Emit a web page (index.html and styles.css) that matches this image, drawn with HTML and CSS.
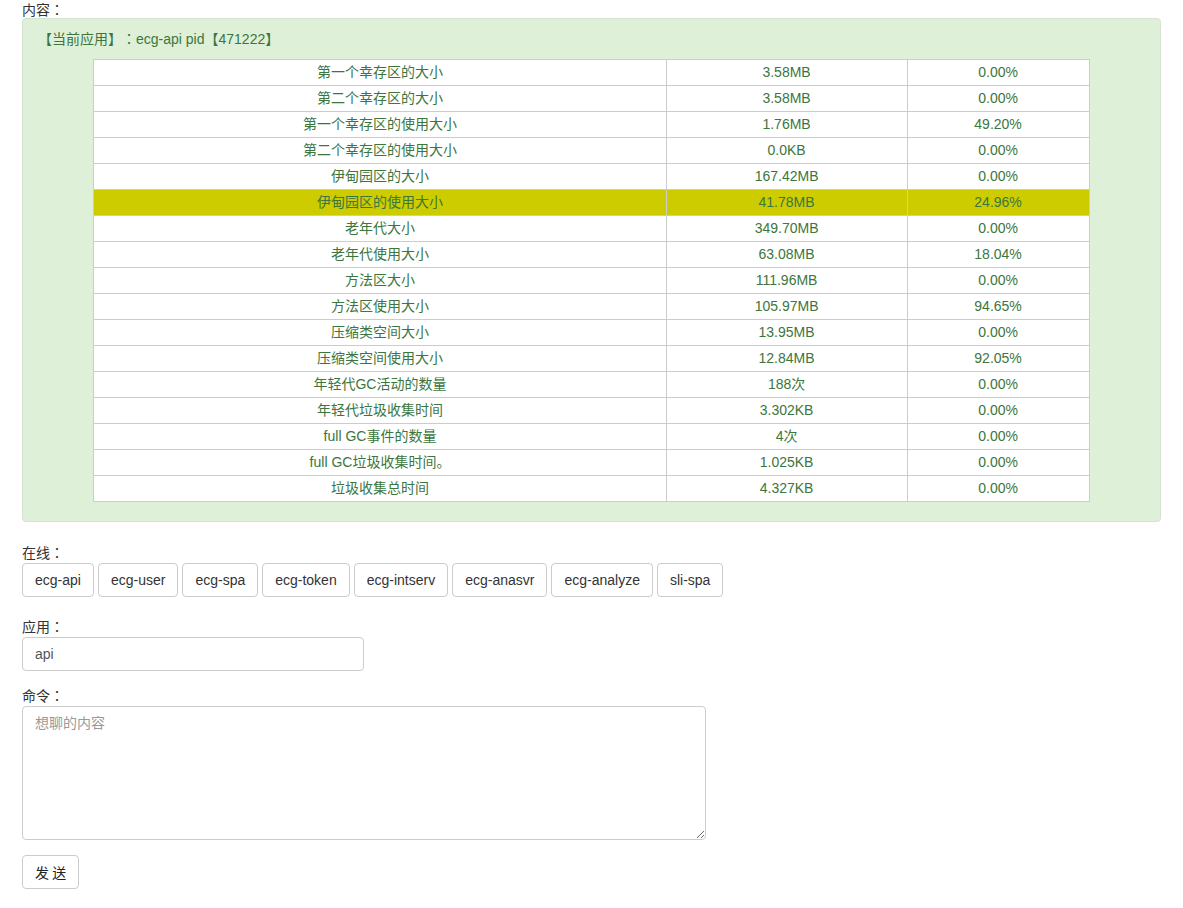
FILE: index.html
```html
<!DOCTYPE html>
<html lang="zh">
<head>
<meta charset="utf-8">
<title>JVM</title>
<link rel="stylesheet" href="styles.css">
</head>
<body>
<div class="page">
  <div class="label first">内容<span class="colon">：</span></div>
  <div class="alert">
    <div class="alert-title">【当前应用】<span class="colon">：</span>ecg-api pid【471222】</div>
    <table class="stats">
      <colgroup><col class="c1"><col class="c2"><col class="c3"></colgroup>
      <tbody>
        <tr><td>第一个幸存区的大小</td><td>3.58MB</td><td>0.00%</td></tr>
        <tr><td>第二个幸存区的大小</td><td>3.58MB</td><td>0.00%</td></tr>
        <tr><td>第一个幸存区的使用大小</td><td>1.76MB</td><td>49.20%</td></tr>
        <tr><td>第二个幸存区的使用大小</td><td>0.0KB</td><td>0.00%</td></tr>
        <tr><td>伊甸园区的大小</td><td>167.42MB</td><td>0.00%</td></tr>
        <tr class="hl"><td>伊甸园区的使用大小</td><td>41.78MB</td><td>24.96%</td></tr>
        <tr><td>老年代大小</td><td>349.70MB</td><td>0.00%</td></tr>
        <tr><td>老年代使用大小</td><td>63.08MB</td><td>18.04%</td></tr>
        <tr><td>方法区大小</td><td>111.96MB</td><td>0.00%</td></tr>
        <tr><td>方法区使用大小</td><td>105.97MB</td><td>94.65%</td></tr>
        <tr><td>压缩类空间大小</td><td>13.95MB</td><td>0.00%</td></tr>
        <tr><td>压缩类空间使用大小</td><td>12.84MB</td><td>92.05%</td></tr>
        <tr><td>年轻代GC活动的数量</td><td>188次</td><td>0.00%</td></tr>
        <tr><td>年轻代垃圾收集时间</td><td>3.302KB</td><td>0.00%</td></tr>
        <tr><td>full GC事件的数量</td><td>4次</td><td>0.00%</td></tr>
        <tr><td>full GC垃圾收集时间。</td><td>1.025KB</td><td>0.00%</td></tr>
        <tr><td>垃圾收集总时间</td><td>4.327KB</td><td>0.00%</td></tr>
      </tbody>
    </table>
  </div>

  <div class="label online">在线<span class="colon">：</span></div>
  <div class="btn-row">
    <button class="btn">ecg-api</button>
    <button class="btn">ecg-user</button>
    <button class="btn">ecg-spa</button>
    <button class="btn">ecg-token</button>
    <button class="btn">ecg-intserv</button>
    <button class="btn">ecg-anasvr</button>
    <button class="btn">ecg-analyze</button>
    <button class="btn">sli-spa</button>
  </div>

  <div class="label app">应用<span class="colon">：</span></div>
  <input class="input" type="text" value="api">

  <div class="label cmd">命令<span class="colon">：</span></div>
  <textarea class="textarea" placeholder="想聊的内容"></textarea>

  <div class="send-row">
    <button class="btn send">发 送</button>
  </div>
</div>
</body>
</html>
```

FILE: styles.css
```css
html, body {
  margin: 0;
  padding: 0;
  background: #fff;
}
body {
  font-family: "Liberation Sans", "Noto Sans CJK SC", sans-serif;
  font-size: 14px;
  line-height: 20px;
  color: #333;
  text-spacing-trim: space-all;
}
.page {
  padding: 0 22px;
}
.colon {
  display: inline-block;
  font-family: "Noto Sans CJK TC", sans-serif;
}
.label {
  line-height: 20px;
}
.label.first {
  line-height: 18px;
  height: 18px;
}
.alert {
  width: 1139px;
  box-sizing: border-box;
  background: #dff0d8;
  border: 1px solid #d6e2d0;
  border-radius: 4px;
  color: #3c763d;
  padding: 9px 15px 19px;
}
.alert-title {
  line-height: 20px;
  margin-bottom: 10px;
}
.stats {
  width: 90%;
  margin: 0 auto;
  border-collapse: collapse;
  background: #fff;
  table-layout: fixed;
}
.stats .c1 { width: 57.5%; }
.stats .c2 { width: 24.2%; }
.stats .c3 { width: 18.3%; }
.stats td {
  border: 1px solid #cccccc;
  text-align: center;
  padding: 2px 8px 3px;
  line-height: 20px;
}
.stats tr.hl td {
  background: #cccc00;
}
.label.online {
  margin-top: 20px;
}
.btn-row {
  display: flex;
  gap: 4px;
}
.btn {
  font-family: "Liberation Sans", "Noto Sans CJK SC", sans-serif;
  font-size: 14px;
  line-height: 20px;
  color: #333;
  background: #fff;
  border: 1px solid #ccc;
  border-radius: 4px;
  padding: 6px 12px;
  margin: 0;
}
.label.app {
  margin-top: 19px;
}
.input {
  display: block;
  box-sizing: border-box;
  width: 342px;
  height: 34px;
  padding: 6px 12px;
  font-family: "Liberation Sans", "Noto Sans CJK SC", sans-serif;
  font-size: 14px;
  line-height: 20px;
  color: #555;
  border: 1px solid #ccc;
  border-radius: 4px;
  margin: 0;
}
.label.cmd {
  margin-top: 14px;
}
.textarea {
  display: block;
  box-sizing: border-box;
  width: 684px;
  height: 134px;
  padding: 6px 12px;
  font-family: "Liberation Sans", "Noto Sans CJK SC", sans-serif;
  font-size: 14px;
  line-height: 20px;
  color: #555;
  border: 1px solid #ccc;
  border-radius: 4px;
  margin: 0;
}
.textarea::placeholder {
  color: #999;
}
.send-row {
  margin-top: 15px;
}
.btn.send {
  font-family: "Noto Sans CJK SC", sans-serif;
  color: #222;
  padding: 6px 12px;
}
```
